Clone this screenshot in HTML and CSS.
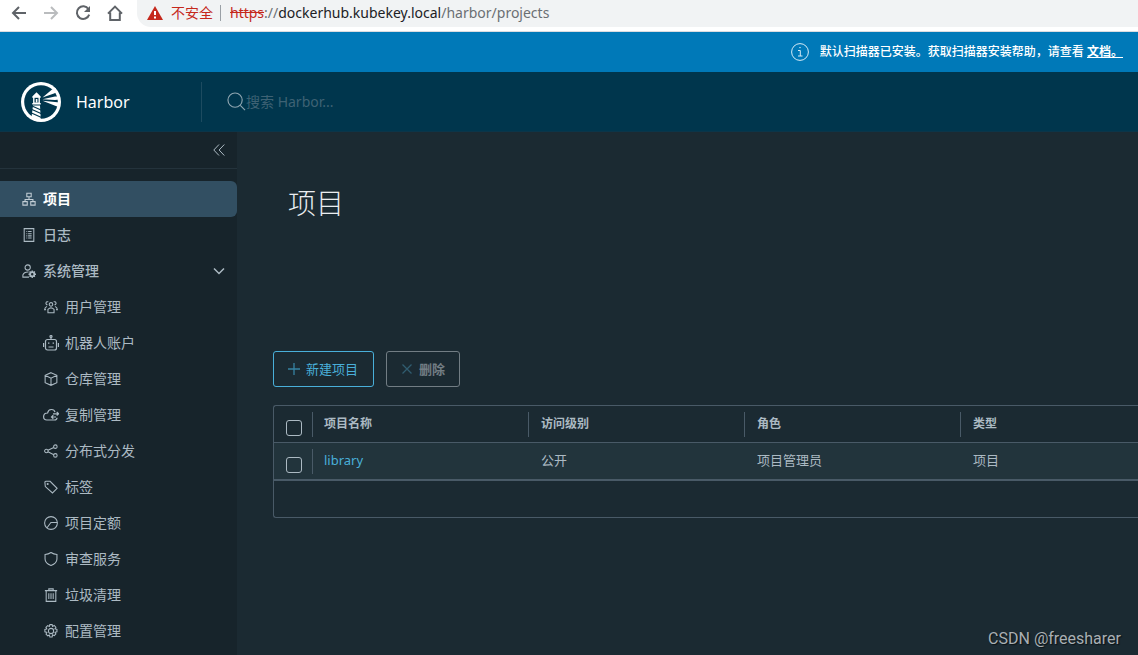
FILE: index.html
```html
<!DOCTYPE html>
<html lang="zh-CN">
<head>
<meta charset="utf-8">
<title>Harbor</title>
<link rel="stylesheet" href="styles.css">
</head>
<body>
<div class="browser">
  <div class="browser-nav">
    <button class="nav-btn" aria-label="后退"><svg viewBox="0 0 16 16"><path d="M15 8H2M8 2L2 8l6 6"/></svg></button>
    <button class="nav-btn faded" aria-label="前进"><svg viewBox="0 0 16 16"><path d="M1 8h13M8 2l6 6-6 6"/></svg></button>
    <button class="nav-btn" aria-label="刷新"><svg viewBox="0 0 16 16"><path d="M13.5 4.2A6.3 6.3 0 1 0 14.2 9.6"/><path class="solid" d="M15 1v6H9z"/></svg></button>
    <button class="nav-btn" aria-label="主页"><svg viewBox="0 0 16 16"><path d="M1 8.6L8 1.6l7 7M3.2 7.5V15h9.6V7.5"/></svg></button>
  </div>
  <div class="address">
    <svg class="warn" viewBox="0 0 16 14"><path fill="#c5281c" d="M8 0l8 14H0z"/><path stroke="#fff" stroke-width="2" d="M8 5v4M8 10.400v2"/></svg>
    <span class="insecure">不安全</span>
    <span class="url"><s>https</s><span class="dim">://</span>dockerhub.kubekey.local<span class="dim">/harbor/projects</span></span>
  </div>
</div>

<div class="banner">
  <svg class="banner-icon" viewBox="0 0 18 18"><circle cx="9" cy="9" r="8.400"/><path d="M7 7.500h2.300V13M7 13h4.500M8.300 4.600h1.400"/></svg>
  <p>默认扫描器已安装。获取扫描器安装帮助，请查看 <a href="#">文档。</a></p>
</div>

<header class="header">
  <div class="brand">
    <svg class="logo" viewBox="0 0 40 40">
      <circle cx="20" cy="20" r="20" fill="#fff"/><circle cx="20" cy="20" r="16.800" fill="#00364d"/>
      <path fill="#fff" d="M21.500 15.500L31 7.500 34.500 6l1.500 4-3 1.500zM21.500 17.200L34 14.500l4.500 0v3L34 18zM21.500 18.800L34 20l4.500.5-1 4.500-4-1.500z"/>
      <path fill="#fff" d="M11.300 14.500l4.200-4.200 4.200 4.200v1.200h-.8v5.300h.8v1.500h-8.400V21h.8v-5.300h-.8zM12 23.500h7l.8 14.500-9.300-2.800z"/>
      <path fill="#00364d" d="M13.500 15.800h4v4.700h-4z"/><path fill="#fff" d="M14.800 17h1.600v3.500h-1.600z"/>
      <path stroke="#00364d" stroke-width="1.200" d="M11 24l9 4M11 27.500l9.500 4.200M10.500 31l10 4.500"/>
    </svg>
    <span>Harbor</span>
  </div>
  <label class="search">
    <svg viewBox="0 0 20 20"><circle cx="8.500" cy="8.500" r="7.500"/><path d="M14 14l5 5"/></svg>
    <input type="text" aria-label="搜索" placeholder="搜索 Harbor...">
  </label>
</header>

<div class="body">
  <nav class="sidebar">
    <div class="collapse"><button aria-label="收起"><svg viewBox="0 0 12 12"><path d="M6 .5L.8 6 6 11.500M11.300.5L6.100 6l5.200 5.500"/></svg></button></div>
    <a class="item active" href="#"><svg viewBox="0 0 16 16"><path d="M5.500 1.500h5v4h-5zM1 11h5v4H1zM10 11h5v4h-5zM8 5.500v3M3.500 11V8.500h9V11"/></svg>项目</a>
    <a class="item" href="#"><svg viewBox="0 0 16 16"><path d="M2.500.7h11v14.600h-11zM5 4h1M7 4h4M5 6.500h1M7 6.500h4M5 9h1M7 9h4M5 11.500h1M7 11.500h4"/></svg>日志</a>
    <button class="item"><svg viewBox="0 0 16 16"><circle cx="6.500" cy="4" r="3"/><path d="M8 15H1v-2.500C2 10 4 9 7.500 9.200"/><circle cx="11.700" cy="11.700" r="2.400" stroke-width="2"/><path stroke-width="1.600" d="M11.700 7.400v2M11.700 14v2M7.400 11.700h2M14 11.700h2M8.700 8.700l1.300 1.300M13.400 13.400l1.300 1.300M8.700 14.700l1.300-1.300M13.400 10l1.300-1.300"/></svg>系统管理<svg class="caret" viewBox="0 0 12 12"><path d="M1 3.500l5 5 5-5"/></svg></button>
    <div class="sub">
      <a class="item" href="#"><svg viewBox="0 0 16 16"><circle cx="8" cy="5" r="2"/><path d="M4.500 14.500V10.600Q8 7.500 11.500 10.600v3.900zM5 2.200a1.800 1.800 0 1 0-1 3.300M11 2.200a1.800 1.800 0 1 1 1 3.300M3.500 7.500Q1 8 .7 11h1.500M12.500 7.500q2.500.5 2.800 3.500h-1.500"/></svg>用户管理</a>
      <a class="item" href="#"><svg class="wide" viewBox="0 0 16 16"><rect x="2.500" y="4.500" width="11" height="10.500" rx="2"/><circle cx="8" cy="1.500" r="1"/><path d="M8 2.500v2M.6 8v4M15.400 8v4M5 8.200h1.400M9.600 8.200H11M5.500 12h5"/></svg>机器人账户</a>
      <a class="item" href="#"><svg viewBox="0 0 16 16"><path d="M8 .8l6.700 3v8.400L8 15.200l-6.700-3V3.800zM1.300 3.800L8 7l6.700-3.200M8 7v8.200"/></svg>仓库管理</a>
      <a class="item" href="#"><svg class="wide" viewBox="0 0 16 16"><path d="M12 5.200C11 1.500 5.500 1.500 4.600 6 1.500 6 .6 8 .6 9.800s1.500 3.200 3.300 3.200h7.600c1.700 0 2.500-1 2.500-2.200M10 6.800h5.500M13.700 5l2 1.800-2 1.700M13 10H8.500M10.300 8.200L8.500 10l1.800 1.700"/></svg>复制管理</a>
      <a class="item" href="#"><svg viewBox="0 0 16 16"><circle cx="2.700" cy="8" r="2"/><circle cx="13" cy="3" r="2"/><circle cx="13" cy="13" r="2"/><path d="M4.500 7.200L11.200 4M4.500 8.900l6.700 3.300"/></svg>分布式分发</a>
      <a class="item" href="#"><svg viewBox="0 0 16 16"><path d="M1 2.500Q1 1.500 2 1.500h5l8 8-5.300 5.300L1.500 7.500z"/><circle cx="4.200" cy="4.600" r=".6"/></svg>标签</a>
      <a class="item" href="#"><svg viewBox="0 0 16 16"><circle cx="8" cy="8" r="7.300"/><path d="M15.300 7.500H8.500q-1 0-1.500 1L3.500 13.500"/></svg>项目定额</a>
      <a class="item" href="#"><svg viewBox="0 0 16 16"><path d="M8 .6q3 2.200 6.800 2.200v5.200c0 3.500-3 6-6.800 7.400C4.200 14 1.200 11.500 1.200 8V2.800Q5 2.800 8 .6z"/></svg>审查服务</a>
      <a class="item" href="#"><svg viewBox="0 0 16 16"><path d="M1 3h14M2.500 3v12.300h11V3M5.500 3V1h5v2M5.500 6v6.500M8 6v6.500M10.500 6v6.500"/></svg>垃圾清理</a>
      <a class="item" href="#"><svg viewBox="0 0 16 16"><circle cx="8" cy="8" r="3"/><path d="M6.700.7h2.600l.5 2 1.800-1 2 2-1.100 1.800 2.300.6v2.800l-2.200.6 1 1.900-1.900 2-1.900-1-.5 2.400H6.700l-.6-2.300-1.800 1-2-2 1-1.900-2.300-.7V6.200l2.200-.6-1-1.800 2-2 1.900 1z"/></svg>配置管理</a>
    </div>
  </nav>

  <main class="content">
    <h1>项目</h1>
    <div class="actions">
      <button class="btn primary"><svg viewBox="0 0 12 12"><path d="M6 0v12M0 6h12"/></svg>新建项目</button>
      <button class="btn remove" disabled><svg viewBox="0 0 12 12"><path d="M1.500 1.500l9 9M10.500 1.500l-9 9"/></svg>删除</button>
    </div>
    <div class="grid">
      <table>
        <thead><tr><th class="check"><input type="checkbox" aria-label="全选"></th><th>项目名称</th><th>访问级别</th><th>角色</th><th class="last">类型</th></tr></thead>
        <tbody><tr><td class="check"><input type="checkbox" aria-label="选择 library"></td><td><a href="#">library</a></td><td>公开</td><td>项目管理员</td><td>项目</td></tr></tbody>
      </table>
      <div class="grid-footer"></div>
    </div>
  </main>
</div>
<div class="watermark">CSDN @freesharer</div>
</body>
</html>
```
FILE: styles.css
```css
* { box-sizing: border-box; }
body {
  margin: 0;
  min-height: 100vh;
  display: flex;
  flex-direction: column;
  overflow: hidden;
  background: #1b2a32;
  color: #acbac3;
  font: 14px/20px "Noto Sans", "Noto Sans CJK SC", sans-serif;
}
svg { fill: none; stroke: currentColor; flex: none; }
button { font: inherit; color: inherit; background: none; border: 0; padding: 0; }
a { color: inherit; text-decoration: none; }

.browser { display: flex; height: 32px; background: #fff; border-bottom: 1px solid #dadce0; }
.browser-nav { display: flex; gap: 16px; padding: 5px 14px 0 11px; height: 21px; color: #5f6368; }
.nav-btn { width: 16px; height: 16px; }
.nav-btn svg { display: block; width: 16px; height: 16px; stroke-width: 2; }
.nav-btn .solid { fill: currentColor; stroke: none; }
.faded { color: #babcbe; }
.address { flex: 1; height: 27px; display: flex; align-items: center; padding: 0 0 1px 10px; background: #f1f3f4; border-radius: 0 0 0 14px; }
.warn { width: 16px; height: 14px; stroke: none; }
.insecure { margin-left: 8px; padding-right: 7px; line-height: 16px; color: #c5281c; border-right: 1px solid #9aa0a6; }
.url { margin-left: 9px; color: #202124; }
.url s { color: #c5281c; }
.dim { color: #6b6f73; }

.banner { height: 40px; display: flex; align-items: center; justify-content: flex-end; gap: 11px; padding-right: 15px; background: #0079b8; color: #fff; font-size: 12px; font-weight: 500; }
.banner p { margin: 0; }
.banner a { font-weight: 700; text-decoration: underline; }
.banner-icon { width: 18px; height: 18px; color: #d5eaf5; }

.header { height: 60px; display: flex; align-items: center; background: #00364d; border-bottom: 1px solid #0b3549; }
.brand { width: 202px; height: 40px; display: flex; align-items: center; gap: 15px; padding-left: 21px; border-right: 1px solid #1d4b60; color: #fff; font-size: 16px; }
.logo { width: 40px; height: 40px; stroke: none; }
.search { flex: 1; display: flex; align-items: center; padding-left: 25px; color: #8fa6b1; }
.search svg { width: 19px; height: 19px; stroke-width: 1.2; }
.search input { flex: 1; padding: 0; border: 0; outline: 0; background: none; color: #fff; font: inherit; }
.search input::placeholder { color: #3e6274; opacity: 1; }

.body { flex: 1; display: flex; }
.sidebar { width: 237px; flex: none; background: #17242b; }
.collapse { height: 37px; margin-bottom: 12px; padding-right: 12px; display: flex; justify-content: flex-end; align-items: center; border-bottom: 1px solid #24333c; }
.collapse svg { display: block; width: 12px; height: 12px; }
.item { width: 100%; height: 36px; display: flex; align-items: center; gap: 7px; padding: 0 12px 0 22px; font-weight: 500; text-align: left; }
.item svg { width: 14px; height: 14px; stroke-width: 1.2; }
.item .wide { width: 16px; height: 16px; margin: 0 -1px; }
.item.active { background: #324f62; color: #fff; font-weight: 700; border-radius: 0 6px 6px 0; }
.active svg { color: #c3ced6; }
.item .caret { width: 12px; height: 12px; margin-left: auto; stroke-width: 1.5; }
.sub .item { padding-left: 44px; font-weight: 400; }

.content { flex: 1; min-width: 0; padding: 51px 0 0 36px; }
h1 { margin: 0; padding-left: 15px; color: #eaedf0; font-size: 28px; line-height: 40px; font-weight: 300; }
.actions { display: flex; gap: 12px; margin: 128px 0 18px; }
.btn { height: 36px; display: flex; align-items: center; gap: 6px; padding: 0 14px; border: 1px solid #49afd9; border-radius: 3px; color: #49afd9; font-size: 13px; }
.btn.primary { padding-right: 15px; }
.btn svg { width: 12px; height: 12px; color: #3683a2; stroke-width: 1.3; }
.btn.remove { border-color: #727d84; color: #727d84; font-weight: 700; }
.btn.remove svg { color: #305c70; }

.grid { border: 1px solid #495a67; border-right: 0; border-radius: 3px 0 0 3px; font-size: 13px; }
table { width: 100%; table-layout: fixed; border-collapse: separate; border-spacing: 0; }
th, td { position: relative; width: 216px; height: 37px; padding: 0 0 0 12px; text-align: left; border-bottom: 1px solid #495a67; }
th { font-size: 12px; }
th.last { width: auto; }
td { padding-bottom: 2px; }
th + th::before, .check + td::before { content: ""; position: absolute; left: -1px; top: 6px; height: 25px; border-left: 1px solid #495a67; }
.check { width: 39px; padding-bottom: 0; }
.check + th, .check + td { padding-left: 11px; }
tbody tr { background: #22343c; }
td a { color: #49afd9; }
input[type="checkbox"] { appearance: none; display: block; width: 16px; height: 16px; margin: 7px 0 0; border: 1px solid #acbac3; border-radius: 3px; }
.grid-footer { height: 37px; border-top: 1px solid #495a67; }

.watermark { position: absolute; right: 17px; bottom: 6px; color: #a9afb3; font: 16px/20px Roboto, sans-serif; text-shadow: 1px 1px 1px #0b1216; }
```
